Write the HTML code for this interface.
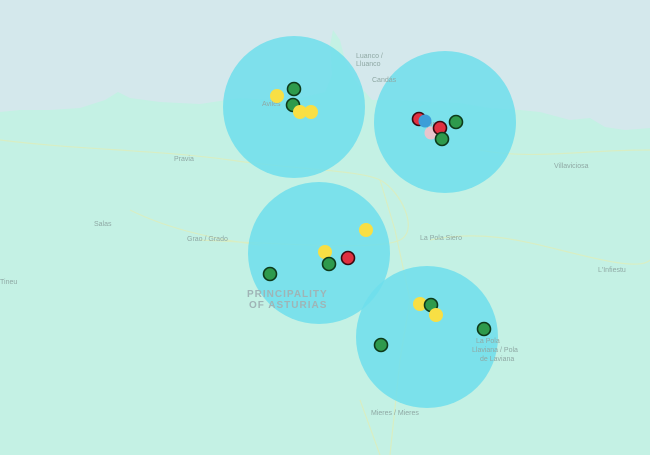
<!DOCTYPE html>
<html><head><meta charset="utf-8"><style>
html,body{margin:0;padding:0;width:650px;height:455px;overflow:hidden;background:#c4f1e4}
svg{display:block}
text{font-family:"Liberation Sans",sans-serif;fill:#8fa8a4}
</style></head><body>
<svg width="650" height="455" viewBox="0 0 650 455" xmlns="http://www.w3.org/2000/svg">
<rect width="650" height="455" fill="#c4f1e4"/>
<path d="M0 0H650V128L625 130 605 127 590 118 570 120 540 112 520 110 490 108 460 103 430 102 400 100 372 100 355 80 345 60 340 40 333 30 330 45 332 75 325 92 300 98 270 100 240 98 200 104 160 102 130 98 118 92 105 100 80 108 50 110 20 110 0 112Z" fill="#d4e8ec"/>
<g stroke="#dbeec0" stroke-width="1.2" fill="none" opacity="0.9">
<path d="M0 140 C80 150 160 150 230 160 S360 170 380 180 S420 230 400 240 S300 245 200 240"/>
<path d="M380 180 L395 230 L410 300 L400 360 L390 455"/>
<path d="M430 240 C480 230 520 240 560 250 S640 270 650 260"/>
<path d="M130 210 C170 230 220 240 260 245"/>
<path d="M480 150 C530 160 580 150 650 150"/>
<path d="M360 400 L380 455"/>
</g>
<g fill="#6fdeec" fill-opacity="0.85">
<circle cx="294" cy="107" r="71"/>
<circle cx="445" cy="122" r="71"/>
<circle cx="319" cy="253" r="71"/>
<circle cx="427" cy="337" r="71"/>
</g>
<g font-size="7">
<text x="356" y="58">Luanco /</text><text x="356" y="66">Lluanco</text>
<text x="372" y="82">Candás</text>
<text x="262" y="106">Avilés</text>
<text x="174" y="161">Pravia</text>
<text x="554" y="168">Villaviciosa</text>
<text x="94" y="226">Salas</text>
<text x="187" y="241">Grao / Grado</text>
<text x="420" y="240">La Pola Siero</text>
<text x="598" y="272">L'Infiestu</text>
<text x="0" y="284">Tineu</text>
<text x="476" y="343">La Pola</text><text x="472" y="352">Llaviana / Pola</text><text x="480" y="361">de Laviana</text>
<text x="371" y="415">Mieres / Mieres</text>
<text x="420" y="126">Gijón</text>
</g>
<g font-size="10" font-weight="bold" style="letter-spacing:1px">
<text x="247" y="297" style="fill:#9fb4b6">PRINCIPALITY</text>
<text x="249" y="308" style="fill:#9fb4b6">OF ASTURIAS</text>
</g>
<g>
<circle cx="277" cy="96" r="7" fill="#f8df44"/>
<circle cx="294" cy="89" r="6.5" fill="#2e9a4c" stroke="#0d3a1a" stroke-width="1.6"/>
<circle cx="293" cy="105" r="6.5" fill="#2e9a4c" stroke="#0d3a1a" stroke-width="1.6"/>
<circle cx="300" cy="112" r="7" fill="#f8df44"/>
<circle cx="311" cy="112" r="7" fill="#f8df44"/>

<circle cx="419" cy="119" r="6.5" fill="#e03040" stroke="#3a0a10" stroke-width="1.6"/>
<circle cx="425" cy="121" r="6.5" fill="#3c9ed8"/>
<circle cx="431" cy="133" r="6.5" fill="#e8c4cc"/>
<circle cx="440" cy="128" r="6.5" fill="#e03040" stroke="#3a0a10" stroke-width="1.6"/>
<circle cx="456" cy="122" r="6.5" fill="#2e9a4c" stroke="#0d3a1a" stroke-width="1.6"/>
<circle cx="442" cy="139" r="6.5" fill="#2e9a4c" stroke="#0d3a1a" stroke-width="1.6"/>

<circle cx="366" cy="230" r="7" fill="#f8df44"/>
<circle cx="325" cy="252" r="7" fill="#f8df44"/>
<circle cx="329" cy="264" r="6.5" fill="#2e9a4c" stroke="#0d3a1a" stroke-width="1.6"/>
<circle cx="348" cy="258" r="6.5" fill="#e03040" stroke="#3a0a10" stroke-width="1.6"/>
<circle cx="270" cy="274" r="6.5" fill="#2e9a4c" stroke="#0d3a1a" stroke-width="1.6"/>

<circle cx="420" cy="304" r="7" fill="#f8df44"/>
<circle cx="431" cy="305" r="6.5" fill="#2e9a4c" stroke="#0d3a1a" stroke-width="1.6"/>
<circle cx="436" cy="315" r="7" fill="#f8df44"/>
<circle cx="484" cy="329" r="6.5" fill="#2e9a4c" stroke="#0d3a1a" stroke-width="1.6"/>
<circle cx="381" cy="345" r="6.5" fill="#2e9a4c" stroke="#0d3a1a" stroke-width="1.6"/>
</g>
</svg>
</body></html>
